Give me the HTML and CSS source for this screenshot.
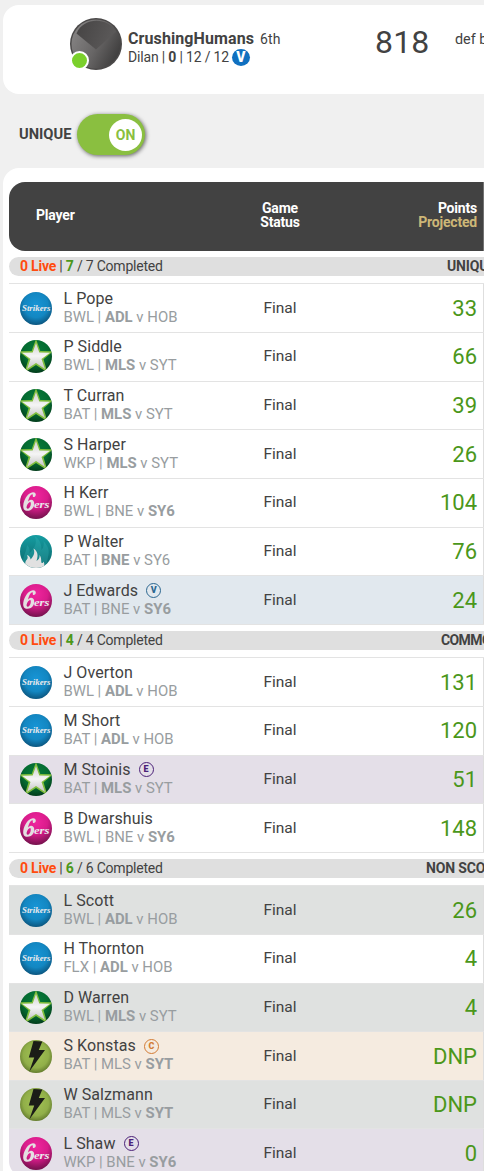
FILE: index.html
```html
<!DOCTYPE html>
<html lang="en">
<head>
<meta charset="utf-8">
<title>Live scoring</title>
<link rel="stylesheet" href="styles.css">
</head>
<body>
<svg class="defs" width="0" height="0" aria-hidden="true">
  <defs>
    <radialGradient id="gBlue" cx=".5" cy=".4" r=".62"><stop offset="0" stop-color="#1795d6"/><stop offset=".6" stop-color="#1387c2"/><stop offset="1" stop-color="#0b527a"/></radialGradient>
    <radialGradient id="gGreen" cx=".5" cy=".35" r=".65"><stop offset="0" stop-color="#087d3c"/><stop offset=".6" stop-color="#046b31"/><stop offset="1" stop-color="#033d1c"/></radialGradient>
    <linearGradient id="gStar" x1="0" y1="0" x2="0" y2="1"><stop offset="0" stop-color="#cfcfcf"/><stop offset=".5" stop-color="#f5f5f5"/><stop offset="1" stop-color="#c4c4c4"/></linearGradient>
    <radialGradient id="gPink" cx=".5" cy=".3" r=".72"><stop offset="0" stop-color="#f0259e"/><stop offset=".5" stop-color="#d91c8b"/><stop offset="1" stop-color="#6e1149"/></radialGradient>
    <linearGradient id="gTeal" x1="0" y1="0" x2="0" y2="1"><stop offset="0" stop-color="#159da2"/><stop offset="1" stop-color="#0b6468"/></linearGradient>
    <radialGradient id="gLime" cx=".5" cy=".45" r=".56"><stop offset="0" stop-color="#a3c455"/><stop offset=".7" stop-color="#91af49"/><stop offset="1" stop-color="#637b2d"/></radialGradient>
    <linearGradient id="gGrey" x1="0" y1=".3" x2="1" y2=".8"><stop offset="0" stop-color="#858383"/><stop offset=".5" stop-color="#676565"/><stop offset="1" stop-color="#393838"/></linearGradient>
    <linearGradient id="gWedge" x1="0" y1="0" x2="1" y2=".3"><stop offset="0" stop-color="#454343"/><stop offset="1" stop-color="#5b5959"/></linearGradient>
    <clipPath id="disc"><ellipse cx="16" cy="16.5" rx="16" ry="16.5"/></clipPath>
    <symbol id="strikers" viewBox="0 0 32 33">
      <ellipse cx="16" cy="16.5" rx="16" ry="16.5" fill="url(#gBlue)"/>
      <text x="2" y="19.3" class="script" font-size="7.5" textLength="28.5" lengthAdjust="spacingAndGlyphs">Strikers</text>
    </symbol>
    <symbol id="stars" viewBox="0 0 32 33">
      <ellipse cx="16" cy="16.5" rx="16" ry="16.5" fill="url(#gGreen)"/>
      <g clip-path="url(#disc)">
      <path d="M16 -1 20.300 11 33 11.300 23.500 19.200 27.500 32.500 16 25 4.500 32.500 8.500 19.200 -1 11.300 11.700 11Z" fill="#80bd3c"/>
      <path d="M16 3 19.300 12.400 30 12.800 21.500 19 25 29 16 22.900 7 29 10.500 19 2 12.800 12.700 12.400Z" fill="url(#gStar)"/>
      </g>
    </symbol>
    <symbol id="sixers" viewBox="0 0 32 33">
      <ellipse cx="16" cy="16.500" rx="16" ry="16.500" fill="url(#gPink)"/>
      <path d="M15.800 8.500C15.500 5.500 11.500 5.200 8 8.800C4 13 2 20.400 4 23.500C6 26 11.500 25 13.500 21C15.200 17.300 14 13.200 10.700 13.700C9.500 14 8.600 14.700 8 15.500C8.700 12.500 10.200 8.900 12 8.200C13.500 7.800 12.200 10.800 13.400 11C14.700 11.200 15.900 9.800 15.800 8.500ZM9.500 16.200C11 15.500 11.100 18 10.400 20.100C9.500 22.600 7.500 23.500 6.700 22C6.200 20.500 7.500 17.200 9.500 16.200Z" fill="#e4dfe1"/>
      <text x="14" y="22" class="script" font-size="10" textLength="15.500" lengthAdjust="spacingAndGlyphs">ers</text>
    </symbol>
    <symbol id="heat" viewBox="0 0 32 33">
      <ellipse cx="16" cy="16.500" rx="16" ry="16.500" fill="url(#gTeal)"/>
      <g clip-path="url(#disc)">
      <path d="M3 33C1 24 6 19 7 10C9.500 12 10 15 9.500 18C14 14 18 8 14.500 1C21 5 21.500 11 21.500 15C24 12 24 9 23.500 6C28 11 30 15 28 22L26 33Z" fill="#38b5b8" opacity=".3"/>
      <path d="M5.500 33C5 28 5.300 26 6.500 25C8.200 23.300 7.800 22 7 20C9.500 21 10.500 22.500 10.500 24.500C13.200 22 15.500 18 13.500 13.500C17.500 16 18.500 20 16.500 26C18.800 24.500 20 22.500 19.500 20C22.200 23 20.500 27.500 22 28C22.800 28.200 23.300 27.500 23.300 26.500C25 28.500 24.500 31 23 33Z" fill="#e1e1e1"/>
      </g>
    </symbol>
    <symbol id="thunder" viewBox="0 0 32 33">
      <ellipse cx="16" cy="16.500" rx="16" ry="16.500" fill="url(#gLime)"/>
      <path d="M13.500 1 22.300 1.500 18.800 10 25 10 9.300 31.500 14.200 17.500 8.800 17.500Z" fill="#1b1d17"/>
    </symbol>
  </defs>
</svg>

<header class="team">
  <div class="avatar">
    <svg width="52" height="52" viewBox="0 0 52 52"><circle cx="26" cy="26" r="26" fill="#4b4949"/><circle cx="26" cy="26" r="24.500" fill="url(#gGrey)"/><path d="M6.500 15.500C13 -1 38-1 46 13.500L26 31.500Z" fill="url(#gWedge)"/></svg>
    <span class="online"></span>
  </div>
  <div class="who">
    <div class="line1"><b>CrushingHumans</b><span class="rank">6th</span></div>
    <div class="line2"><span>Dilan | <b>0</b> | 12 / 12</span><i class="vbadge">V</i></div>
  </div>
  <div class="total">818</div>
  <div class="def">def by</div>
</header>

<div class="filter"><b>UNIQUE</b><div class="switch"><span>ON</span></div></div>

<main class="board">
  <div class="head"><div class="h-player">Player</div><div class="status">Game<br>Status</div><div class="h-points">Points<br><em>Projected</em></div></div>

  <div class="bar"><span><b class="live">0 Live</b> | <b class="done">7</b> / 7 Completed</span><strong class="t1">UNIQUE</strong></div>
  <section>
    <div class="row"><svg class="logo"><use href="#strikers"/></svg><div class="info"><p>L Pope</p><small>BWL | <b>ADL</b> v HOB</small></div><div class="status">Final</div><div class="pts">33</div></div>
    <div class="row"><svg class="logo"><use href="#stars"/></svg><div class="info"><p>P Siddle</p><small>BWL | <b>MLS</b> v SYT</small></div><div class="status">Final</div><div class="pts">66</div></div>
    <div class="row"><svg class="logo"><use href="#stars"/></svg><div class="info"><p>T Curran</p><small>BAT | <b>MLS</b> v SYT</small></div><div class="status">Final</div><div class="pts">39</div></div>
    <div class="row"><svg class="logo"><use href="#stars"/></svg><div class="info"><p>S Harper</p><small>WKP | <b>MLS</b> v SYT</small></div><div class="status">Final</div><div class="pts">26</div></div>
    <div class="row"><svg class="logo"><use href="#sixers"/></svg><div class="info"><p>H Kerr</p><small>BWL | BNE v <b>SY6</b></small></div><div class="status">Final</div><div class="pts">104</div></div>
    <div class="row"><svg class="logo"><use href="#heat"/></svg><div class="info"><p>P Walter</p><small>BAT | <b>BNE</b> v SY6</small></div><div class="status">Final</div><div class="pts">76</div></div>
    <div class="row vice"><svg class="logo"><use href="#sixers"/></svg><div class="info"><p>J Edwards<i class="tag">V</i></p><small>BAT | BNE v <b>SY6</b></small></div><div class="status">Final</div><div class="pts">24</div></div>
  </section>

  <div class="bar"><span><b class="live">0 Live</b> | <b class="done">4</b> / 4 Completed</span><strong class="t2">COMMON</strong></div>
  <section>
    <div class="row"><svg class="logo"><use href="#strikers"/></svg><div class="info"><p>J Overton</p><small>BWL | <b>ADL</b> v HOB</small></div><div class="status">Final</div><div class="pts">131</div></div>
    <div class="row"><svg class="logo"><use href="#strikers"/></svg><div class="info"><p>M Short</p><small>BAT | <b>ADL</b> v HOB</small></div><div class="status">Final</div><div class="pts">120</div></div>
    <div class="row emerg"><svg class="logo"><use href="#stars"/></svg><div class="info"><p>M Stoinis<i class="tag">E</i></p><small>BAT | <b>MLS</b> v SYT</small></div><div class="status">Final</div><div class="pts">51</div></div>
    <div class="row"><svg class="logo"><use href="#sixers"/></svg><div class="info"><p>B Dwarshuis</p><small>BWL | BNE v <b>SY6</b></small></div><div class="status">Final</div><div class="pts">148</div></div>
  </section>

  <div class="bar"><span><b class="live">0 Live</b> | <b class="done">6</b> / 6 Completed</span><strong class="t3">NON SCORING</strong></div>
  <section class="last">
    <div class="row bench"><svg class="logo"><use href="#strikers"/></svg><div class="info"><p>L Scott</p><small>BWL | <b>ADL</b> v HOB</small></div><div class="status">Final</div><div class="pts">26</div></div>
    <div class="row"><svg class="logo"><use href="#strikers"/></svg><div class="info"><p>H Thornton</p><small>FLX | <b>ADL</b> v HOB</small></div><div class="status">Final</div><div class="pts">4</div></div>
    <div class="row bench"><svg class="logo"><use href="#stars"/></svg><div class="info"><p>D Warren</p><small>BWL | <b>MLS</b> v SYT</small></div><div class="status">Final</div><div class="pts">4</div></div>
    <div class="row capt"><svg class="logo"><use href="#thunder"/></svg><div class="info"><p>S Konstas<i class="tag">C</i></p><small>BAT | MLS v <b>SYT</b></small></div><div class="status">Final</div><div class="pts">DNP</div></div>
    <div class="row bench"><svg class="logo"><use href="#thunder"/></svg><div class="info"><p>W Salzmann</p><small>BAT | MLS v <b>SYT</b></small></div><div class="status">Final</div><div class="pts">DNP</div></div>
    <div class="row emerg"><svg class="logo"><use href="#sixers"/></svg><div class="info"><p>L Shaw<i class="tag">E</i></p><small>WKP | BNE v <b>SY6</b></small></div><div class="status">Final</div><div class="pts">0</div></div>
  </section>
</main>
</body>
</html>
```
FILE: styles.css
```css
* { box-sizing: border-box; }
html { height: 1171px; overflow: hidden; }
body {
  margin: 0;
  height: 1171px;
  overflow: hidden;
  background: #f0f0f0;
  color: #424242;
  font-family: Roboto, "Liberation Sans", sans-serif;
  font-size: 14px;
}
.defs { display: block; }
.script { font-family: "Liberation Serif", serif; font-style: italic; font-weight: bold; fill: #e9e9ec; }

.team {
  display: flex;
  height: 89px;
  margin: 5px 0 0 3px;
  padding-left: 67px;
  background: #fff;
  border-radius: 16px 0 0 16px;
  white-space: nowrap;
  overflow: hidden;
}
.avatar { position: relative; flex: none; width: 51px; height: 52px; margin-top: 13px; }
.avatar svg { display: block; }
.online {
  position: absolute;
  left: 0;
  top: 33px;
  width: 19px;
  height: 19px;
  border: 2px solid #fff;
  border-radius: 50%;
  background: #7bd02c;
}
.who { flex: none; width: 254px; padding: 24px 0 0 7px; }
.line1 { height: 19px; line-height: 19px; font-size: 16px; letter-spacing: .1px; }
.rank { margin-left: 6px; font-size: 14px; }
.line2 { display: flex; align-items: center; height: 18px; font-size: 14px; letter-spacing: -.18px; }
.vbadge {
  width: 18px;
  height: 17px;
  margin-left: 3px;
  border-radius: 50%;
  background: #1070c0;
  color: #fff;
  font-weight: 900;
  font-size: 14px;
  font-style: normal;
  line-height: 17px;
  text-align: center;
}
.total { flex: none; width: 80px; padding-top: 16px; font-size: 32px; letter-spacing: .2px; line-height: 42px; }
.def { padding-top: 26px; line-height: 18px; font-size: 14.400px; }

.filter { display: flex; align-items: flex-start; height: 74px; padding: 20px 0 0 19px; font-size: 14.700px; }
.filter b { width: 58px; line-height: 40px; }
.switch {
  display: flex;
  justify-content: flex-end;
  align-items: center;
  width: 68px;
  height: 41px;
  padding-right: 3px;
  border-radius: 21px;
  background: #8abf40;
  box-shadow: 1px 1px 4px rgba(0,0,0,.6);
}
.switch span {
  width: 33px;
  height: 32px;
  border-radius: 50%;
  background: #fff;
  color: #8abf40;
  font-weight: bold;
  font-size: 14px;
  line-height: 32px;
  text-align: center;
}

.board { height: 1020px; margin-left: 3px; padding: 14px 0 0 6px; background: #fff; border-radius: 16px 0 0 16px; overflow: hidden; }
.head {
  display: flex;
  align-items: center;
  height: 69px;
  margin-bottom: 6px;
  padding-bottom: 3px;
  border-radius: 16px 0 0 16px;
  background: linear-gradient(90deg, transparent 474px, #737373 474px) #424242;
  color: #fff;
  font-weight: bold;
  font-size: 14px;
  letter-spacing: -.2px;
  line-height: 14px;
}
.h-player { flex: none; width: 221px; padding-left: 27px; }
.h-points { flex: none; width: 147px; text-align: right; }
.h-points em { color: #cdb777; font-style: normal; }
.status { flex: none; width: 100px; text-align: center; }

.bar { display: flex; height: 19px; padding-left: 11px; border-radius: 10px 0 0 10px; background: #dfdfdf; line-height: 19px; white-space: nowrap; overflow: hidden; }
.bar span { flex: none; width: 300px; letter-spacing: -.21px; }
.bar strong { letter-spacing: -.15px; }
.live { color: #ff4c0f; }
.done { color: #4b971a; }
.t1 { margin-left: 127px; }
.t2 { margin-left: 121px; }
.bar .t2 { letter-spacing: -.6px; }
.t3 { margin-left: 106px; }

section { padding: 7.330px 0 7px; }
.row {
  display: flex;
  align-items: flex-start;
  height: 48.667px;
  border-top: 1px solid #e3e3e3;
  background: linear-gradient(90deg, transparent 474px, #dedede 474px);
}
.row:last-child { box-shadow: 0 1px #e3e3e3; }
.logo { flex: none; width: 32px; height: 33px; margin: 7.500px 0 0 11px; }
.info { flex: none; width: 178px; padding: 4.300px 0 0 11.400px; }
.info p { display: flex; align-items: center; height: 20px; margin: 0; font-size: 16px; letter-spacing: .08px; line-height: 20px; }
.info small { display: block; height: 18px; font-size: 14.900px; line-height: 17px; color: #989da0; }
.row .status { padding-top: 13.400px; font-size: 15.500px; line-height: 20px; }
.pts { flex: none; width: 147px; padding-top: 11.500px; font-size: 22px; line-height: 26px; color: #4b971a; text-align: right; }
.tag {
  width: 15px;
  height: 15px;
  margin-left: 8px;
  border: 1.500px solid currentColor;
  border-radius: 50%;
  font-size: 9px;
  font-style: normal;
  font-weight: 900;
  letter-spacing: 0;
  line-height: 13px;
  text-align: center;
}
.vice { background-color: #e1e8ee; }
.vice .tag { color: #2c6790; }
.emerg { background-color: #e4dfe8; }
.emerg .tag { color: #4b2178; }
.bench { background-color: #dfe1e0; }
.capt { background-color: #f5ebe0; }
.capt .tag { color: #d37c35; }
.last .row:last-child { border-bottom-left-radius: 16px; box-shadow: none; }
```
